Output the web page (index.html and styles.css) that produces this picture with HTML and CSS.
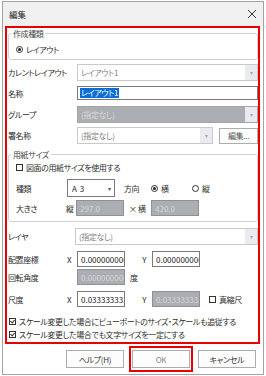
FILE: index.html
```html
<!DOCTYPE html>
<html lang="ja">

<head>
    <meta charset="UTF-8">
    <meta name="viewport" content="width=device-width, initial-scale=1.0">
    <title>編集</title>
    <link rel="stylesheet" href="styles.css">
</head>

<body>
    <div class="dialog">
        <div class="titlebar">
            <span class="title">編集</span>
            <svg class="close" width="10" height="10" viewBox="0 0 10 10">
                <path d="M1 1 L9 9 M9 1 L1 9" stroke="#333" stroke-width="1" fill="none"/>
            </svg>
        </div>

        <div class="panel">
            <fieldset class="group g-type">
                <legend>作成種類</legend>
                <div class="line"><span class="radio on"></span>レイアウト</div>
            </fieldset>

            <div class="row r-current">
                <span class="lbl">カレントレイアウト</span>
                <div class="combo ro"><span class="val">レイアウト1</span><span class="arrow">▾</span></div>
            </div>
            <div class="row r-name">
                <span class="lbl">名称</span>
                <div class="edit dark"><span class="sel">レイアウト1</span></div>
            </div>
            <div class="row r-group">
                <span class="lbl">グループ</span>
                <div class="combo off"><span class="val">(指定なし)</span><span class="arrow">▾</span></div>
            </div>
            <div class="row r-sign">
                <span class="lbl">署名称</span>
                <div class="combo ro short"><span class="val">(指定なし)</span><span class="arrow">▾</span></div>
                <button class="btn small">編集...</button>
            </div>

            <fieldset class="group g-paper">
                <legend>用紙サイズ</legend>
                <div class="line chk-line"><span class="check"></span>図面の用紙サイズを使用する</div>
                <div class="row r-kind">
                    <span class="lbl">種類</span>
                    <div class="combo size"><span class="val">A 3</span><span class="arrow plain">▾</span></div>
                    <span class="dir">方向</span>
                    <span class="opt"><span class="radio on"></span>横</span>
                    <span class="opt"><span class="radio"></span>縦</span>
                </div>
                <div class="row r-size">
                    <span class="lbl">大きさ</span>
                    <span class="pre">縦</span>
                    <div class="edit num off">297.0</div>
                    <span class="mid">× 横</span>
                    <div class="edit num off">420.0</div>
                </div>
            </fieldset>

            <div class="row r-layer">
                <span class="lbl">レイヤ</span>
                <div class="combo ro"><span class="val">(指定なし)</span><span class="arrow">▾</span></div>
            </div>
            <div class="row r-pos">
                <span class="lbl">配置座標</span>
                <span class="pre">X</span>
                <div class="edit num dark">0.000000000</div>
                <span class="mid">Y</span>
                <div class="edit num dark">0.000000000</div>
            </div>
            <div class="row r-rot">
                <span class="lbl">回転角度</span>
                <span class="pre"></span>
                <div class="edit num off">0.000000000</div>
                <span class="unit">度</span>
            </div>
            <div class="row r-scale">
                <span class="lbl">尺度</span>
                <span class="pre">X</span>
                <div class="edit num dark">0.033333333</div>
                <span class="mid">Y</span>
                <div class="edit num off">0.033333333</div>
                <span class="opt real"><span class="check"></span>真縮尺</span>
            </div>
            <div class="line chk-row c1"><span class="check on"></span>スケール変更した場合にビューポートのサイズ・スケールも追従する</div>
            <div class="line chk-row c2"><span class="check on"></span>スケール変更した場合でも文字サイズを一定にする</div>
        </div>

        <div class="footer">
            <button class="btn">ヘルプ(H)</button>
            <div class="ok-frame"><button class="btn ok">OK</button></div>
            <button class="btn">キャンセル</button>
        </div>
    </div>
</body>

</html>
```

FILE: styles.css
```css
* {
    box-sizing: border-box;
}
body {
    margin: 0;
    padding: 0;
    background-color: #fff;
    font-family: "Noto Sans CJK JP", "Noto Sans", sans-serif;
    font-size: 8px;
    letter-spacing: -0.4px;
    font-feature-settings: "palt";
    color: #2b2b2b;
}

.dialog {
    margin: 1px 2px 0;
    width: 262px;
    height: 374px;
    border: 1px solid #a3a3a3;
    display: flex;
    flex-direction: column;
    background-color: #fff;
}

.titlebar {
    height: 24px;
    background-color: #f0f0f0;
    display: flex;
    align-items: center;
    justify-content: space-between;
    padding: 0 6px 0 6px;
}
.title {
    font-size: 8.5px;
    letter-spacing: 0;
    color: #222;
}

/* 赤枠 */
.panel {
    margin: 0 3px 0 2px;
    height: 318px;
    border: 2px solid #e80000;
    padding: 0 0 0 1px;
    display: flex;
    flex-direction: column;
}

.group {
    margin: 0;
    width: 250px;
    border: 1px solid #cfd2de;
    border-radius: 3px;
    padding: 0 4px 0 7px;
}
.group legend {
    margin-left: -5px;
    padding: 0 2px;
    height: 11px;
    line-height: 11px;
    color: #444;
}
.g-type .line {
    height: 20px;
}
.g-paper {
    margin-top: 5px;
    padding-bottom: 5px;
}

.line {
    display: flex;
    align-items: center;
    gap: 2px;
}

.radio {
    width: 7px;
    height: 7px;
    flex-shrink: 0;
    border: 1px solid #333;
    border-radius: 50%;
    display: inline-flex;
    align-items: center;
    justify-content: center;
    margin-right: 1px;
}
.radio.on::after {
    content: "";
    width: 3px;
    height: 3px;
    border-radius: 50%;
    background-color: #222;
}

.check {
    width: 7px;
    height: 7px;
    flex-shrink: 0;
    border: 1px solid #333;
    display: inline-block;
    margin-right: 1px;
    position: relative;
}
.check.on::after {
    content: "";
    position: absolute;
    left: 1px;
    top: 0;
    width: 2px;
    height: 3px;
    border-right: 1px solid #333;
    border-bottom: 1px solid #333;
    transform: rotate(40deg);
}

.row {
    display: flex;
    align-items: center;
}
.lbl {
    width: 69px;
    flex-shrink: 0;
    white-space: nowrap;
}

.combo {
    height: 17px;
    width: 181px;
    flex-shrink: 0;
    border: 1px solid #c9c9c9;
    display: flex;
    align-items: center;
    justify-content: space-between;
    background-color: #fff;
}
.combo .val {
    padding-left: 3px;
    white-space: nowrap;
}
.combo.ro .val {
    color: #808080;
}
.combo .arrow {
    width: 12px;
    height: 100%;
    background-color: #e9ebf1;
    color: #aaa;
    font-size: 6px;
    display: flex;
    align-items: center;
    justify-content: center;
}
.combo.off {
    background-color: #abaeb3;
    border-color: #a2a4a8;
}
.combo.off .val {
    color: #d9d9d9;
}
.combo.short {
    width: 136px;
}

.edit {
    height: 14px;
    width: 181px;
    flex-shrink: 0;
    border: 1px solid #7a7a7a;
    display: flex;
    align-items: center;
    padding-left: 2px;
    overflow: hidden;
    white-space: nowrap;
    background-color: #fff;
}
.edit .sel {
    background-color: #0a6ed6;
    color: #fff;
    padding: 0 1px;
    line-height: 10px;
}
.edit.num {
    width: 48px;
    height: 16px;
    padding-left: 3px;
    letter-spacing: 0;
    color: #222;
}
.edit.off {
    background-color: #abaeb3;
    border-color: #8f9194;
    color: #d6d6d6;
}

.btn {
    font-family: inherit;
    font-size: 8px;
    letter-spacing: -0.3px;
    font-feature-settings: "palt";
    color: #333;
    background-color: #fdfdfd;
    border: 1px solid #adadad;
    width: 58px;
    height: 18px;
    padding: 0;
}
.btn.small {
    width: 39px;
    height: 16px;
    margin-left: 6px;
    color: #555;
}

.r-current {
    margin-top: 4px;
}
.r-name {
    margin-top: 5px;
}
.r-group {
    margin-top: 6px;
}
.r-sign {
    margin-top: 4px;
}

/* 用紙サイズ */
.chk-line {
    height: 14px;
}
.g-paper .lbl {
    width: 51px;
}
.r-kind {
    margin-top: 5px;
    height: 18px;
}
.combo.size {
    width: 48px;
    height: 18px;
    border-color: #7a7a7a;
}
.combo.size .val {
    padding-left: 4px;
    letter-spacing: 0.6px;
    color: #222;
}
.combo .arrow.plain {
    background-color: transparent;
    color: #555;
    width: 10px;
}
.dir {
    margin-left: 9px;
    width: 27px;
}
.opt {
    display: flex;
    align-items: center;
    gap: 2px;
    width: 41px;
}
.r-size {
    margin-top: 3px;
}
.pre {
    width: 10px;
    margin-left: -1px;
}
.mid {
    width: 27px;
    padding-left: 5px;
}
.r-pos .mid,
.r-scale .mid {
    text-align: right;
    padding-right: 6px;
    padding-left: 0;
}

.r-layer {
    margin-top: 6px;
}
.r-layer .lbl {
    width: 67px;
}
.r-layer .combo {
    width: 183px;
}
.r-pos {
    margin-top: 6px;
}
.r-pos .lbl,
.r-rot .lbl,
.r-scale .lbl {
    width: 60px;
}
.r-rot {
    margin-top: 2px;
}
.unit {
    margin-left: 5px;
}
.r-scale {
    margin-top: 6px;
}
.opt.real {
    margin-left: 9px;
    width: auto;
}

.chk-row {
    height: 13px;
    padding-left: 1px;
    white-space: nowrap;
}
.c1 {
    margin-top: 8px;
}

.footer {
    flex: 1;
    display: flex;
    align-items: center;
    justify-content: flex-end;
    gap: 5px;
    padding-right: 7px;
}
.ok-frame {
    border: 2px solid #e80000;
    padding: 2px 1px;
}
.btn.ok {
    color: #8a8a8a;
}
```
